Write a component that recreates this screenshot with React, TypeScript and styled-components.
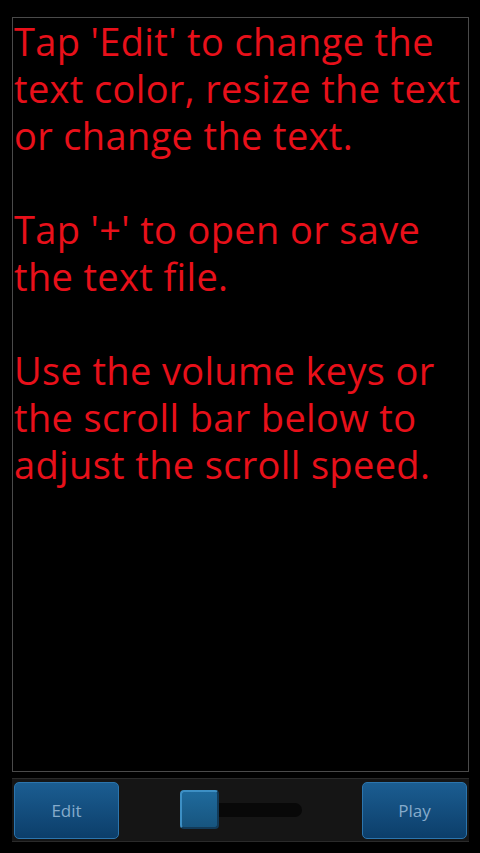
import styled, { createGlobalStyle } from 'styled-components';

const GlobalStyle = createGlobalStyle`
  html, body {
    margin: 0;
    padding: 0;
    background: #000;
  }

  body {
    width: 480px;
    height: 853px;
    overflow: hidden;
  }
`;

const Screen = styled.div`
  display: flex;
  flex-direction: column;
  width: 480px;
  height: 853px;
  padding: 17px 11px 11px 12px;
  box-sizing: border-box;
  background: #000;
`;

const TextBox = styled.div`
  flex: 1;
  border: 1px solid #4a4a4a;
  padding: 0 0 0 1px;
  box-sizing: border-box;
  overflow: hidden;
`;

const Paragraph = styled.p`
  margin: 0 0 47px;
  color: #e8101a;
  font-family: "Open Sans", "DejaVu Sans", sans-serif;
  font-size: 38px;
  line-height: 47px;
  letter-spacing: 0.35px;
`;

const BottomBar = styled.div`
  display: flex;
  align-items: center;
  justify-content: space-between;
  height: 64px;
  margin-top: 6px;
  padding: 0 2px;
  background: #151515;
  border-top: 1px solid #2a2a2a;
  border-bottom: 1px solid #2a2a2a;
  box-sizing: border-box;
`;

const BarButton = styled.button`
  width: 105px;
  height: 57px;
  border: 1px solid #2c75ad;
  border-radius: 5px;
  background: linear-gradient(#1b5d91, #0c3e6a);
  color: #86abcb;
  font-family: "Open Sans", "DejaVu Sans", sans-serif;
  font-size: 17px;
  cursor: pointer;
`;

const Slider = styled.div`
  display: flex;
  align-items: center;
  width: 122px;
  height: 40px;
  margin-left: 60px;
  margin-right: 60px;
  flex: 0 0 auto;
  position: relative;
`;

const Track = styled.div`
  flex: 1;
  height: 14px;
  margin-left: 20px;
  border-radius: 7px;
  background: #080808;
`;

const Thumb = styled.div`
  position: absolute;
  left: 0;
  top: 0;
  width: 39px;
  height: 39px;
  border-radius: 4px;
  box-sizing: border-box;
  border-top: 2px solid #3d8fc4;
  border-left: 2px solid #3d8fc4;
  border-right: 2px solid #123a58;
  border-bottom: 2px solid #123a58;
  background: linear-gradient(#1f6a9c, #17557f);
`;

const paragraphs = [
  "Tap 'Edit' to change the text color, resize the text or change the text.",
  "Tap '+' to open or save the text file.",
  'Use the volume keys or the scroll bar below to adjust the scroll speed.',
];

export default function App() {
  return (
    <>
      <GlobalStyle />
      <Screen>
        <TextBox>
          {paragraphs.map((p, i) => (
            <Paragraph key={i}>{p}</Paragraph>
          ))}
        </TextBox>
        <BottomBar>
          <BarButton>Edit</BarButton>
          <Slider>
            <Track />
            <Thumb />
          </Slider>
          <BarButton>Play</BarButton>
        </BottomBar>
      </Screen>
    </>
  );
}
